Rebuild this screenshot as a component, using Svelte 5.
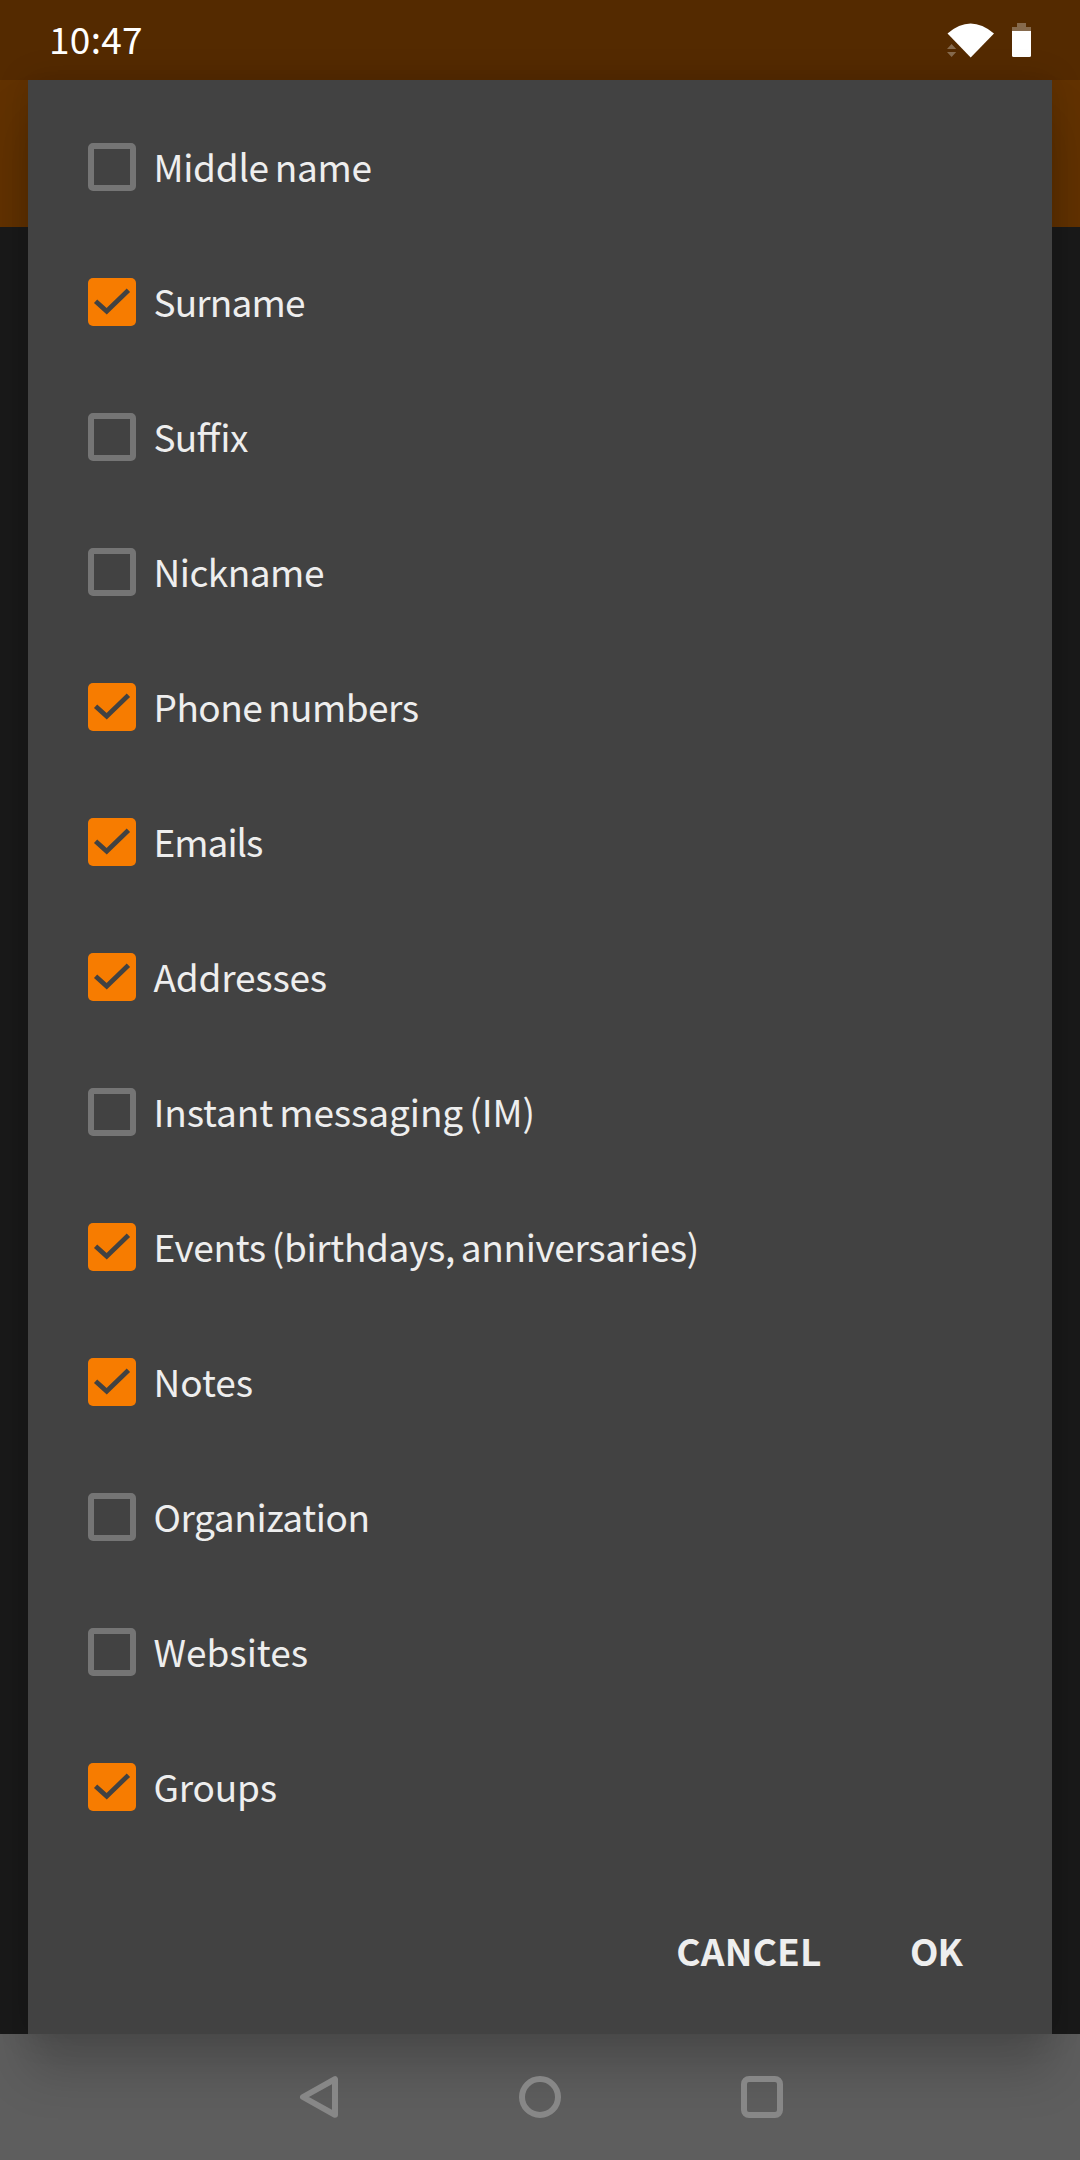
<script>
  // tracking: per-label letter-spacing in px
  let fields = $state([
    { label: 'Middle name', checked: false, tracking: -0.3 },
    { label: 'Surname', checked: true, tracking: -0.85 },
    { label: 'Suffix', checked: false, tracking: -0.7 },
    { label: 'Nickname', checked: false, tracking: -0.5 },
    { label: 'Phone numbers', checked: true, tracking: -0.53 },
    { label: 'Emails', checked: true, tracking: -1 },
    { label: 'Addresses', checked: true, tracking: -0.2 },
    { label: 'Instant messaging (IM)', checked: false, tracking: -0.1 },
    { label: 'Events (birthdays, anniversaries)', checked: true, tracking: -0.35 },
    { label: 'Notes', checked: true, tracking: 0 },
    { label: 'Organization', checked: false, tracking: -0.42 },
    { label: 'Websites', checked: false, tracking: 0 },
    { label: 'Groups', checked: true, tracking: -0.2 }
  ]);
</script>

<div class="screen">
  <header class="status">
    <span class="time">10:47</span>
    <div class="indicators">
      <svg class="wifi" width="48" height="36" viewBox="0 0 48 36">
        <path d="M0.5 10.5 Q23.5 -9.5 47 10.5 L23.7 34.5 Z" fill="#fff" />
        <path d="M0 26 L4.6 21 L9.2 26 Z M0 29 L4.6 34 L9.2 29 Z" fill="#866a4d" />
      </svg>
      <svg width="20" height="36" viewBox="0 0 20 36">
        <path d="M5 0 H14 V4 H19 V8 H0 V4 H5 Z" fill="#866a4d" />
        <path d="M0 8 H19 V32.5 Q19 34 17.5 34 H1.5 Q0 34 0 32.5 Z" fill="#fff" />
      </svg>
    </div>
  </header>

  <main class="backdrop">
    <section class="dialog">
      <ul class="fields">
        {#each fields as field}
          <li>
            <button
              class="field"
              role="checkbox"
              aria-checked={field.checked}
              onclick={() => (field.checked = !field.checked)}
            >
              <span class="box" class:checked={field.checked}>
                {#if field.checked}
                  <svg width="48" height="48" viewBox="0 0 48 48">
                    <path d="M7.6 23.2 L18.7 33.2 L40.4 12.2" fill="none" stroke="#424242" stroke-width="4.8" />
                  </svg>
                {/if}
              </span>
              <span class="label" style:letter-spacing="{field.tracking}px">{field.label}</span>
            </button>
          </li>
        {/each}
      </ul>
      <div class="actions">
        <button class="action cancel">CANCEL</button>
        <button class="action ok">OK</button>
      </div>
    </section>
  </main>

  <nav class="navbar">
    <svg width="42" height="42" viewBox="0 0 42 42">
      <path d="M38 3.2 V38.8 L6 21 Z" />
    </svg>
    <svg width="42" height="42" viewBox="0 0 42 42">
      <circle cx="21" cy="21" r="18" />
    </svg>
    <svg width="42" height="42" viewBox="0 0 42 42">
      <rect x="3" y="3" width="36" height="36" rx="5" />
    </svg>
  </nav>
</div>

<style>
  :global(body) {
    background: #1a1a1a;
  }
  .screen {
    display: grid;
    grid-template-rows: 80px 1954px 126px;
    width: 1080px;
    height: 2160px;
    overflow: hidden;
    font-family: 'Noto Sans CJK SC', 'Noto Sans', sans-serif;
    font-size: 37px;
    color: #eeeeee;
  }
  .status {
    display: flex;
    justify-content: space-between;
    align-items: flex-start;
    padding: 0 48px 0 49px;
    background: #542a00;
    color: #fff;
  }
  .time {
    line-height: 77px;
    letter-spacing: 0.3px;
  }
  .indicators {
    display: flex;
    gap: 17px;
    padding-top: 23px;
  }
  .backdrop {
    display: grid;
    padding: 0 28px;
    background: linear-gradient(#623200 147px, #1a1a1a 147px);
  }
  .dialog {
    position: relative;
    display: flex;
    flex-direction: column;
    justify-content: space-between;
    padding: 19px 0 21px;
    background: #424242;
    box-shadow:
      0 38px 46px rgba(0, 0, 0, 0.17),
      0 0 32px rgba(0, 0, 0, 0.14);
  }
  .fields {
    margin: 0;
    padding: 0;
    list-style: none;
  }
  button {
    margin: 0;
    border: 0;
    background: none;
    color: inherit;
    font: inherit;
  }
  .field {
    display: flex;
    align-items: flex-start;
    gap: 17.5px;
    width: 100%;
    height: 135px;
    padding: 0 60px;
    text-align: left;
  }
  .box {
    box-sizing: border-box;
    flex: none;
    width: 48px;
    height: 48px;
    margin-top: 44px;
    border: 6px solid #757575;
    border-radius: 5px;
  }
  .box.checked {
    border: 0;
    background: #f77c00;
  }
  .box svg {
    display: block;
  }
  .label {
    line-height: 135px;
    white-space: nowrap;
    word-spacing: -2px;
    font-feature-settings: 'liga' 1;
  }
  .actions {
    display: flex;
    justify-content: flex-end;
    gap: 8px;
    padding-right: 32px;
  }
  .action {
    height: 126px;
    padding: 0;
    line-height: 126px;
    font-weight: 700;
  }
  .cancel {
    width: 190px;
    letter-spacing: 0.2px;
  }
  .ok {
    width: 168px;
    letter-spacing: -1px;
  }
  .navbar {
    display: flex;
    justify-content: center;
    align-items: center;
    gap: 180px;
    background: #5e5e5e;
  }
  .navbar svg {
    position: relative;
    z-index: 1;
    fill: none;
    stroke: #878787;
    stroke-width: 6;
    stroke-linejoin: round;
  }
</style>
